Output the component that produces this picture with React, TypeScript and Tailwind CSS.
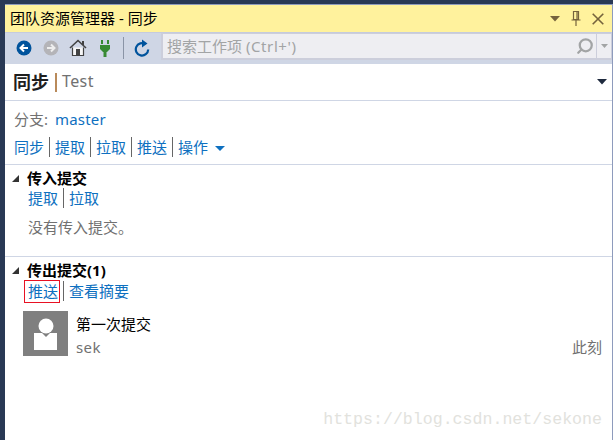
import { Search } from 'lucide-react';

const FONT = "font-['Noto_Sans','Noto_Sans_CJK_SC',sans-serif]";

const LinkRow = ({ items }: { items: string[] }) => (
  <div className="flex items-center h-5 text-[15px] leading-5 text-[#0e70c0]">
    {items.map((item, i) => (
      <span key={item} className="flex items-center">
        {i > 0 && <span className="w-px h-5 bg-[#666] mx-[5px]" />}
        {item}
      </span>
    ))}
  </div>
);

const Triangle = () => (
  <svg width="9" height="9" viewBox="0 0 9 9" className="shrink-0">
    <path d="M8 1V8H1Z" fill="#333" />
  </svg>
);

const SectionHeader = ({ title }: { title: string }) => (
  <div className="flex items-center h-5 pl-[6px] gap-[7px] text-[15px] font-bold leading-5 text-black">
    <Triangle />
    {title}
  </div>
);

const NavButtons = () => (
  <div className="flex items-center w-[156px] pl-[11px] pb-[2px] shrink-0">
    <svg width="16" height="16" viewBox="0 0 16 16">
      <circle cx="8" cy="8" r="7.5" fill="#00539c" />
      <path d="M12 8H5M8 4.5 4.5 8 8 11.5" fill="none" stroke="#fff" strokeWidth="2" />
    </svg>
    <svg width="16" height="16" viewBox="0 0 16 16" className="ml-[11px]">
      <circle cx="8" cy="8" r="7.5" fill="#b4b4b8" />
      <path d="M4 8h7M8 4.5 11.5 8 8 11.5" fill="none" stroke="#eee" strokeWidth="2" />
    </svg>
    <svg width="18" height="18" viewBox="0 0 18 18" className="ml-[10px]">
      <path d="M1 9 9 1.5 17 9" fill="none" stroke="#424242" strokeWidth="1.6" />
      <path d="M3.5 8.5V16.5H14.5V8.5" fill="#f6f6f6" stroke="#424242" strokeWidth="1.2" />
      <rect x="7" y="10" width="4" height="6.5" fill="#424242" />
      <rect x="13" y="2" width="2" height="4" fill="#424242" />
    </svg>
    <svg width="10" height="18" viewBox="0 0 10 18" className="ml-[13px]">
      <path d="M2 1v4M8 1v4" stroke="#388a34" strokeWidth="2" />
      <path d="M0 6h10v4l-3 3H3l-3-3Z" fill="#388a34" />
      <rect x="3.5" y="12" width="3" height="6" fill="#388a34" />
    </svg>
    <span className="w-px h-[22px] bg-[#8a94a6] ml-[13px]" />
    <svg width="16" height="18" viewBox="0 0 16 18" className="ml-[10px]">
      <path d="M11.5 5.2A6.2 6.2 0 1 0 14.2 10.5" fill="none" stroke="#00539c" strokeWidth="2.2" />
      <path d="M8 0.5V8.5L13.5 4.5Z" fill="#00539c" />
    </svg>
  </div>
);

export default function App() {
  return (
    <div className={`${FONT} relative w-[613px] h-[440px] overflow-hidden bg-[#293955] pl-[5px] pt-[4px]`}>
      <div className="w-[608px] h-[436px] border-t border-r border-[#8e9bbc] bg-white flex flex-col">
        {/* title bar */}
        <div className="flex items-center justify-between h-[28px] bg-[#fff29d] pr-[8px] pl-[5px] border-b border-[#c5cbdd] shrink-0">
          <span className="text-[15px] text-black leading-none">团队资源管理器 - 同步</span>
          <div className="flex items-center gap-[11px]">
            <svg width="10" height="6" viewBox="0 0 10 6">
              <path d="M0 0H10L5 5.5Z" fill="#75633d" />
            </svg>
            <svg width="10" height="15" viewBox="0 0 10 15">
              <path d="M2.5.5h5v8h-5ZM.5 9h9M5 9v6M6 1v7" fill="none" stroke="#75633d" strokeWidth="1.2" />
            </svg>
            <svg width="12" height="12" viewBox="0 0 12 12">
              <path d="M.7.7 11.3 11.3M11.3.7.7 11.3" stroke="#75633d" strokeWidth="1.6" />
            </svg>
          </div>
        </div>

        {/* toolbar */}
        <div className="flex h-[31px] bg-[#cfd6e5] shrink-0">
          <NavButtons />
          <div className="flex flex-1 items-center h-[27px] bg-[#eeeef2] border-2 border-t border-r border-[#cccedb] pl-[4px]">
            <span className="flex-1 text-[15px] text-[#a2a4a5] leading-none">
              搜索工作项 <span className="tracking-[0.6px]">(Ctrl+')</span>
            </span>
            <Search size={18} strokeWidth={3} className="text-[#a2a4a5] -scale-x-100 mr-[2px]" />
            <span className="w-px h-full bg-[#cccedb]" />
            <svg width="14" height="6" viewBox="0 0 14 6">
              <path d="M4 1h7L7.5 5Z" fill="#a2a4a5" />
            </svg>
          </div>
        </div>

        {/* page header */}
        <div className="flex items-center justify-between h-[37px] border-b border-[#cfd6e5] pl-[8px] pr-[5px] shrink-0">
          <div className="flex items-center">
            <span className="text-[18px] font-bold text-[#1e1e1e] leading-none">同步</span>
            <span className="w-[2px] h-[19px] bg-[#b98a5a] ml-[6px] mr-[5px]" />
            <span className="text-[16px] text-[#717171] leading-none tracking-[0.4px] -mt-[2px]">Test</span>
          </div>
          <svg width="10" height="6" viewBox="0 0 10 6">
            <path d="M0 0H10L5 5.5Z" fill="#1e2a3e" />
          </svg>
        </div>

        {/* branch + actions */}
        <div className="h-[64px] border-b border-[#cfd6e5] pl-[9px] pt-[8px] shrink-0">
          <div className="flex items-center h-5 text-[15px] leading-5">
            <span className="text-[#717171] mr-[7px]">分支:</span>
            <span className="text-[#0e70c0] tracking-[0.2px]">master</span>
          </div>
          <div className="flex items-center mt-[8px]">
            <LinkRow items={['同步', '提取', '拉取', '推送', '操作']} />
            <svg width="10" height="5" viewBox="0 0 10 5" className="ml-[7px] mt-[3px]">
              <path d="M0 0H10L5 5Z" fill="#0e70c0" />
            </svg>
          </div>
        </div>

        {/* incoming */}
        <div className="h-[92px] border-b border-[#cfd6e5] pt-[3px] shrink-0">
          <SectionHeader title="传入提交" />
          <div className="pl-[23px]">
            <LinkRow items={['提取', '拉取']} />
            <div className="text-[15px] leading-5 text-[#717171] mt-[9px]">没有传入提交。</div>
          </div>
        </div>

        {/* outgoing */}
        <div className="flex-1 pt-[3px]">
          <SectionHeader title="传出提交(1)" />
          <div className="relative mt-[1px] pl-[23px]">
            <LinkRow items={['推送', '查看摘要']} />
            <div className="absolute left-[19px] -top-[1px] w-[36px] h-[23px] border border-[#e81123]" />
          </div>
          <div className="flex mt-[10px] pl-[18px] pr-[10px]">
            <svg width="45" height="45" viewBox="0 0 45 45" className="shrink-0">
              <rect width="45" height="45" fill="#7f7f7f" />
              <circle cx="23" cy="15" r="7.5" fill="#fff" />
              <path d="M11 22h8l4 4 4-4h7v17H11Z" fill="#fff" />
            </svg>
            <div className="flex-1 ml-[8px] pt-[3px]">
              <div className="text-[15px] leading-5 text-black">第一次提交</div>
              <div className="flex justify-between mt-[3px] text-[15px] leading-5 text-[#717171]">
                <span className="tracking-[0.4px]">sek</span>
                <span>此刻</span>
              </div>
            </div>
          </div>
        </div>
      </div>
      {/* csdn watermark */}
      <span className="absolute right-[11px] bottom-[11px] font-['Liberation_Mono',monospace] text-[16.6px] leading-none text-[#e2e2dd]">
        https://blog.csdn.net/sekone
      </span>
    </div>
  );
}
